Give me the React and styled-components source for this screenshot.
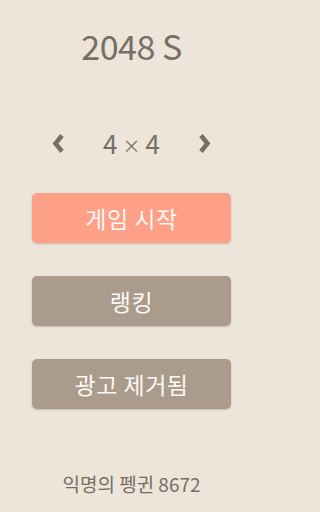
import React, { useState } from 'react';
import styled, { createGlobalStyle } from 'styled-components';

const GlobalStyle = createGlobalStyle`
  html, body {
    margin: 0;
    padding: 0;
    background: #ede4da;
  }
  * { box-sizing: border-box; }
`;

const FONT = `"Noto Sans CJK KR", "Noto Sans", sans-serif`;

/* ─── Layout ─────────────────────────────────────────────── */

const Screen = styled.div`
  width: 263px;
  height: 512px;
  display: flex;
  flex-direction: column;
  align-items: center;
  padding: 26px 0 16px;
  background: #ede4da;
  color: #776e65;
  font-family: ${FONT};
`;

const Title = styled.h1`
  margin: 0;
  height: 40px;
  line-height: 40px;
  font-size: 34px;
  font-weight: 400;
  letter-spacing: -0.5px;
`;

/* ─── Board size selector ────────────────────────────────── */

const SizeRow = styled.div`
  margin-top: 62px;
  width: 160px;
  height: 30px;
  display: flex;
  align-items: center;
  justify-content: space-between;
`;

const ArrowButton = styled.button`
  width: 14px;
  height: 24px;
  padding: 0;
  border: none;
  background: none;
  color: #776e65;
  display: flex;
  align-items: center;
  justify-content: center;
  cursor: pointer;
`;

const SizeLabel = styled.div`
  display: flex;
  align-items: center;
  gap: 5px;
  font-size: 26px;
  line-height: 30px;
  font-weight: 400;
`;

const Times = styled.span`
  font-size: 18px;
  padding-top: 3px;
`;

/* ─── Menu buttons ───────────────────────────────────────── */

const Menu = styled.div`
  margin-top: 35px;
  display: flex;
  flex-direction: column;
  gap: 33px;
`;

const MenuButton = styled.button`
  width: 199px;
  height: 50px;
  border: none;
  border-radius: 5px;
  background: ${p => p.$primary ? '#fe9f88' : '#ab9b8d'};
  box-shadow: 0 1px 2px rgba(90, 70, 50, 0.25);
  color: #fbf8f4;
  font-family: ${FONT};
  font-size: 23px;
  font-weight: 400;
  letter-spacing: 0.5px;
  cursor: pointer;
`;

const Footer = styled.div`
  margin-top: auto;
  height: 24px;
  line-height: 24px;
  font-size: 19px;
  color: #776e65;
`;

const Chevron = ({ dir }) => (
  <svg width="13" height="21" viewBox="0 0 13 21">
    <path
      d={dir === 'left' ? 'M10 2.5 L3.5 10.5 L10 18.5' : 'M3 2.5 L9.5 10.5 L3 18.5'}
      fill="none"
      stroke="currentColor"
      strokeWidth="4.5"
      strokeLinejoin="miter"
    />
  </svg>
);

export default function App() {
  const [size, setSize] = useState(4);

  return (
    <Screen>
      <GlobalStyle />
      <Title>2048 S</Title>

      <SizeRow>
        <ArrowButton type="button" onClick={() => setSize(s => Math.max(3, s - 1))}>
          <Chevron dir="left" />
        </ArrowButton>
        <SizeLabel>
          {size}<Times>×</Times>{size}
        </SizeLabel>
        <ArrowButton type="button" onClick={() => setSize(s => Math.min(8, s + 1))}>
          <Chevron dir="right" />
        </ArrowButton>
      </SizeRow>

      <Menu>
        <MenuButton $primary type="button">게임 시작</MenuButton>
        <MenuButton type="button">랭킹</MenuButton>
        <MenuButton type="button">광고 제거됨</MenuButton>
      </Menu>

      <Footer>익명의 펭귄 8672</Footer>
    </Screen>
  );
}
